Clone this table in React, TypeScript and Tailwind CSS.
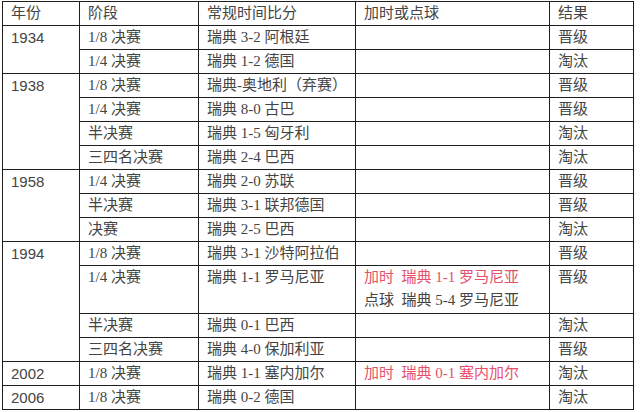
type Row = {
  h: number
  year?: string
  span?: number
  stage: string
  score: string
  extra?: { red: boolean; text: string }[]
  result: string
}

const ROWS: Row[] = [
  { h: 24, year: '1934', span: 2, stage: '1/8 决赛', score: '瑞典 3-2 阿根廷', result: '晋级' },
  { h: 24, stage: '1/4 决赛', score: '瑞典 1-2 德国', result: '淘汰' },
  { h: 24, year: '1938', span: 4, stage: '1/8 决赛', score: '瑞典-奥地利（弃赛）', result: '晋级' },
  { h: 24, stage: '1/4 决赛', score: '瑞典 8-0 古巴', result: '晋级' },
  { h: 24, stage: '半决赛', score: '瑞典 1-5 匈牙利', result: '淘汰' },
  { h: 24, stage: '三四名决赛', score: '瑞典 2-4 巴西', result: '淘汰' },
  { h: 24, year: '1958', span: 3, stage: '1/4 决赛', score: '瑞典 2-0 苏联', result: '晋级' },
  { h: 23, stage: '半决赛', score: '瑞典 3-1 联邦德国', result: '晋级' },
  { h: 24, stage: '决赛', score: '瑞典 2-5 巴西', result: '淘汰' },
  { h: 23, year: '1994', span: 4, stage: '1/8 决赛', score: '瑞典 3-1 沙特阿拉伯', result: '晋级' },
  {
    h: 48,
    stage: '1/4 决赛',
    score: '瑞典 1-1 罗马尼亚',
    extra: [
      { red: true, text: '加时  瑞典 1-1 罗马尼亚' },
      { red: false, text: '点球  瑞典 5-4 罗马尼亚' }
    ],
    result: '晋级'
  },
  { h: 24, stage: '半决赛', score: '瑞典 0-1 巴西', result: '淘汰' },
  { h: 24, stage: '三四名决赛', score: '瑞典 4-0 保加利亚', result: '晋级' },
  {
    h: 23,
    year: '2002',
    span: 1,
    stage: '1/8 决赛',
    score: '瑞典 1-1 塞内加尔',
    extra: [{ red: true, text: '加时  瑞典 0-1 塞内加尔' }],
    result: '淘汰'
  },
  { h: 23, year: '2006', span: 1, stage: '1/8 决赛', score: '瑞典 0-2 德国', result: '淘汰' }
]

const cell = 'border border-[#1e1e1e] align-top pl-2 pr-1 py-0 leading-[23px] whitespace-pre'

export default function App() {
  return (
    <div className="w-[640px] h-[412px] bg-white pt-px pl-[2px] text-[15px] text-[#444] font-['Liberation_Serif','Noto_Sans_CJK_SC',serif]">
      <table className="border-collapse table-fixed w-[631px]">
        <colgroup>
          <col className="w-[77px]" />
          <col className="w-[119px]" />
          <col className="w-[157px]" />
          <col className="w-[194px]" />
          <col className="w-[84px]" />
        </colgroup>
        <tbody>
          <tr className="h-[24px]">
            <td className={cell}>年份</td>
            <td className={cell}>阶段</td>
            <td className={cell}>常规时间比分</td>
            <td className={cell}>加时或点球</td>
            <td className={cell}>结果</td>
          </tr>
          {ROWS.map((r, i) => (
            <tr key={i} style={{ height: r.h }}>
              {r.year ? (
                <td rowSpan={r.span} className={`${cell} font-['Liberation_Sans','Noto_Sans_CJK_SC',sans-serif]`}>
                  {r.year}
                </td>
              ) : null}
              <td className={cell}>{r.stage}</td>
              <td className={cell}>{r.score}</td>
              <td className={cell}>
                {r.extra?.map((e, j) => (
                  <div key={j} className={e.red ? 'text-[#e6506c]' : ''}>
                    {e.text}
                  </div>
                ))}
              </td>
              <td className={cell}>{r.result}</td>
            </tr>
          ))}
        </tbody>
      </table>
    </div>
  )
}
